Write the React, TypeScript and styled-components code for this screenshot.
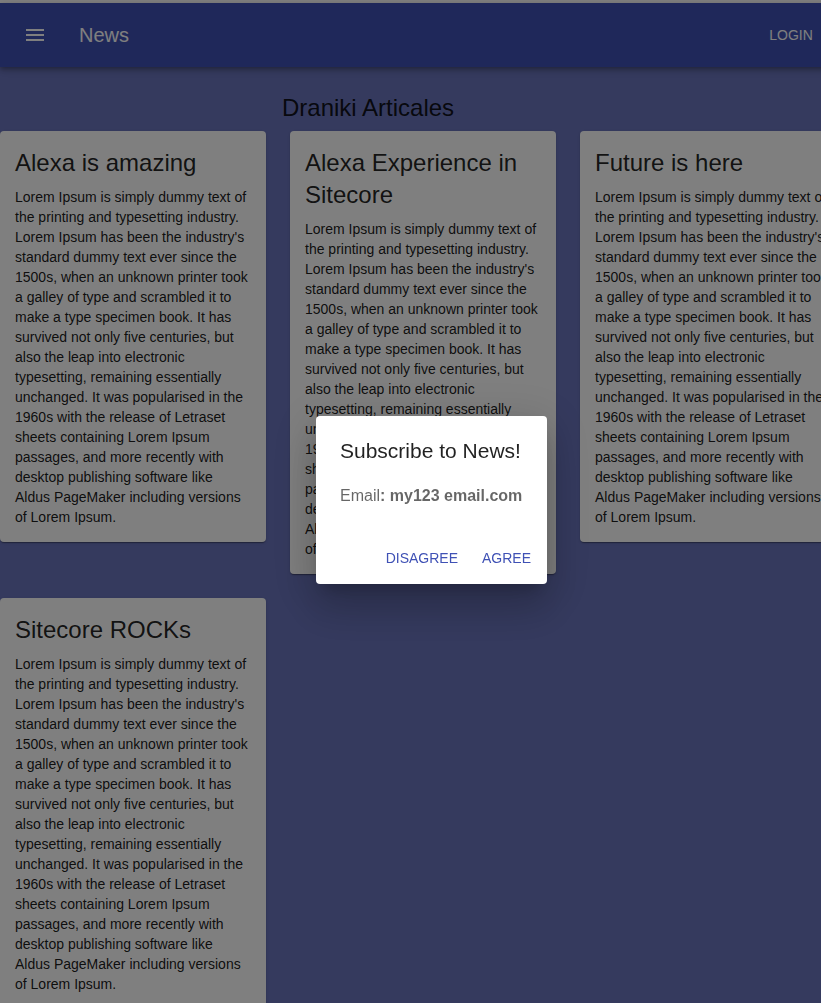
import React from "react";
import styled, { createGlobalStyle } from "styled-components";

const GlobalStyle = createGlobalStyle`
  html, body { margin: 0; padding: 0; }
  body {
    overflow: hidden;
    background: #ffffff;
    font-family: "Liberation Sans", Arial, sans-serif;
  }
`;

const Page = styled.div`
  width: 846px;
  padding-top: 3px;
  background: #ffffff;
`;

const Main = styled.div`
  background: #6a74bc;
  min-height: 1000px;
`;

const AppBar = styled.header`
  height: 64px;
  background: #3f51b5;
  color: #ffffff;
  display: flex;
  align-items: center;
  padding: 0 23px 0 24px;
  box-shadow: 0px 2px 4px -1px rgba(0,0,0,0.2), 0px 4px 5px 0px rgba(0,0,0,0.14), 0px 1px 10px 0px rgba(0,0,0,0.12);
  position: relative;
  z-index: 1;
`;

const IconButton = styled.button`
  width: 48px;
  height: 48px;
  margin-left: -13px;
  margin-right: 20px;
  padding: 12px;
  border: 0;
  background: transparent;
  color: inherit;
  display: flex;
  align-items: center;
  justify-content: center;
`;

const BarTitle = styled.h6`
  margin: 0;
  flex: 1;
  font-size: 20px;
  font-weight: 500;
  line-height: 32px;
`;

const LoginButton = styled.button`
  border: 0;
  background: transparent;
  color: #ffffff;
  font-family: "Liberation Sans", Arial, sans-serif;
  font-size: 14px;
  font-weight: 500;
  text-transform: uppercase;
  padding: 6px 8px;
  min-width: 64px;
  line-height: 24px;
`;

const Heading = styled.h5`
  margin: 25px 0 7px 282px;
  font-size: 24px;
  font-weight: 400;
  line-height: 32px;
  color: rgba(0, 0, 0, 0.87);
`;

const CardGrid = styled.div`
  display: grid;
  grid-template-columns: repeat(3, 266px);
  column-gap: 24px;
  row-gap: 24px;
  align-items: start;
`;

const Card = styled.article`
  background: #ffffff;
  border-radius: 4px;
  padding: 16px 16px 15px 15px;
  box-shadow: 0px 2px 1px -1px rgba(0,0,0,0.2), 0px 1px 1px 0px rgba(0,0,0,0.14), 0px 1px 3px 0px rgba(0,0,0,0.12);
`;

const CardTitle = styled.h2`
  margin: 0 0 8px;
  font-size: 24px;
  font-weight: 400;
  line-height: 32px;
  color: rgba(0, 0, 0, 0.87);
`;

const CardBody = styled.p`
  margin: 0;
  font-size: 14px;
  line-height: 20px;
  color: rgba(0, 0, 0, 0.9);
`;

const Backdrop = styled.div`
  position: fixed;
  inset: 0;
  background: rgba(0, 0, 0, 0.5);
  display: flex;
  align-items: center;
  justify-content: center;
  padding: 0 0 3px 42px;
  z-index: 10;
`;

const Dialog = styled.div`
  width: 231px;
  background: #ffffff;
  border-radius: 4px;
  box-shadow: 0px 11px 15px -7px rgba(0,0,0,0.2), 0px 24px 38px 3px rgba(0,0,0,0.14), 0px 9px 46px 8px rgba(0,0,0,0.12);
`;

const DialogTitle = styled.h2`
  margin: 0;
  padding: 19px 24px 13px;
  font-size: 21px;
  font-weight: 500;
  line-height: 32px;
  color: rgba(0, 0, 0, 0.87);
  white-space: nowrap;
`;

const DialogContent = styled.div`
  padding: 4px 24px 8px;
`;

const DialogText = styled.p`
  margin: 0 0 16px;
  font-size: 16px;
  line-height: 24px;
  color: rgba(0, 0, 0, 0.6);
  white-space: nowrap;
`;

const Strong = styled.b`
  font-weight: 700;
`;

const DialogActions = styled.div`
  display: flex;
  justify-content: flex-end;
  align-items: center;
  gap: 8px;
  padding: 8px;
`;

const TextButton = styled.button`
  border: 0;
  background: transparent;
  color: #3f51b5;
  font-family: "Liberation Sans", Arial, sans-serif;
  font-size: 14px;
  font-weight: 500;
  text-transform: uppercase;
  padding: 6px 8px;
  min-width: 64px;
  height: 36px;
  line-height: 24px;
`;

const LOREM =
  "Lorem Ipsum is simply dummy text of the printing and typesetting industry. Lorem Ipsum has been the industry's standard dummy text ever since the 1500s, when an unknown printer took a galley of type and scrambled it to make a type specimen book. It has survived not only five centuries, but also the leap into electronic typesetting, remaining essentially unchanged. It was popularised in the 1960s with the release of Letraset sheets containing Lorem Ipsum passages, and more recently with desktop publishing software like Aldus PageMaker including versions of Lorem Ipsum.";

const articles = [
  "Alexa is amazing",
  "Alexa Experience in Sitecore",
  "Future is here",
  "Sitecore ROCKs",
];

const MenuIcon = () => (
  <svg width="24" height="24" viewBox="0 0 24 24" fill="currentColor">
    <path d="M3 18h18v-2H3v2zm0-5h18v-2H3v2zm0-7v2h18V6H3z" />
  </svg>
);

export default function App() {
  return (
    <>
      <GlobalStyle />
      <Page>
        <Main>
          <AppBar>
            <IconButton aria-label="menu">
              <MenuIcon />
            </IconButton>
            <BarTitle>News</BarTitle>
            <LoginButton>Login</LoginButton>
          </AppBar>
          <Heading>Draniki Articales</Heading>
          <CardGrid>
            {articles.map((t) => (
              <Card key={t}>
                <CardTitle>{t}</CardTitle>
                <CardBody>{LOREM}</CardBody>
              </Card>
            ))}
          </CardGrid>
        </Main>
      </Page>
      <Backdrop>
        <Dialog>
          <DialogTitle>Subscribe to News!</DialogTitle>
          <DialogContent>
            <DialogText>
              Email<Strong>: my123 email.com</Strong>
            </DialogText>
          </DialogContent>
          <DialogActions>
            <TextButton>Disagree</TextButton>
            <TextButton>Agree</TextButton>
          </DialogActions>
        </Dialog>
      </Backdrop>
    </>
  );
}
